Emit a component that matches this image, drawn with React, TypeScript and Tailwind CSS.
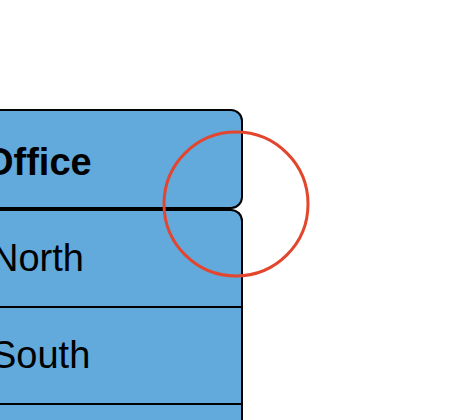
export default function App() {
  const rows = ["North", "South", ""];
  return (
    <div className="relative h-[420px] w-[474px] overflow-hidden bg-white" style={{ fontFamily: '"Liberation Sans", Arial, sans-serif' }}>
      <div className="ml-[-20px] flex w-[263px] flex-col pt-[109px]">
        <div className="flex h-[100px] items-center rounded-[12px] border-2 border-black bg-[#62a9dc] pl-[2px] pt-[6px] text-[38px] font-bold text-black">
          Office
        </div>
        <div className="flex flex-col overflow-hidden rounded-t-[12px] border-2 border-b-0 border-black bg-[#62a9dc]">
          {rows.map((r, i) => (
            <div
              key={i}
              className="flex h-[97px] shrink-0 items-center border-b-2 border-black pl-[9px] text-[38px] text-black"
            >
              {r}
            </div>
          ))}
        </div>
      </div>
      <svg className="absolute left-0 top-0" width="474" height="420">
        <circle cx="236" cy="204" r="72" fill="none" stroke="#e2462e" strokeWidth="3" />
      </svg>
    </div>
  );
}
